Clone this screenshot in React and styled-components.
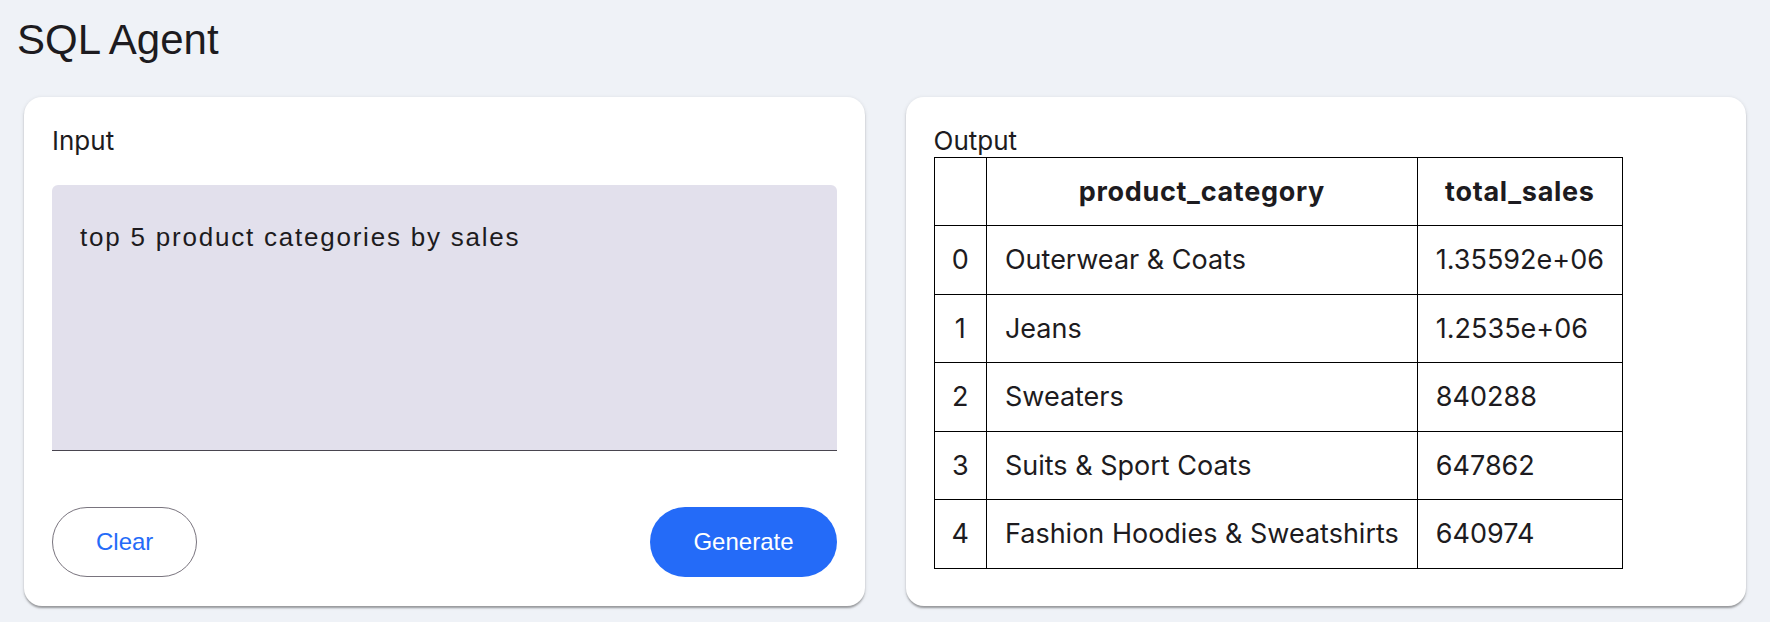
import React from "react";
import styled, { createGlobalStyle } from "styled-components";

const GlobalStyle = createGlobalStyle`
  html, body { margin: 0; padding: 0; }
  body { background: #eff2f7; font-family: "Liberation Sans", Arial, sans-serif; color: #1d1b20; }
  * { box-sizing: border-box; }
`;

const Page = styled.div`
  min-height: 100vh;
  background: #eff2f7;
  padding-top: 16px;
`;

const Title = styled.h1`
  margin: 0;
  padding: 0 17px;
  font-family: "Liberation Sans", Arial, sans-serif;
  font-weight: 400;
  font-size: 42px;
  line-height: normal;
  color: #1d1b20;
`;

const Columns = styled.div`
  display: grid;
  grid-template-columns: 1fr 1fr;
  column-gap: 41px;
  padding: 33px 24px 0 24px;
  align-items: stretch;
`;

const Card = styled.section`
  background: #ffffff;
  border-radius: 18px;
  padding: 28px 28px 29px 28px;
  box-shadow: 0 3px 2px -1px rgba(0, 0, 0, 0.2), 0 2px 2px 0 rgba(0, 0, 0, 0.14),
    0 1px 4px 0 rgba(0, 0, 0, 0.12);
  display: flex;
  flex-direction: column;
`;

const Label = styled.div`
  font-family: Inter, "Liberation Sans", sans-serif;
  font-size: 26px;
  font-weight: 400;
  line-height: normal;
  color: #1d1b20;
  margin-bottom: ${(p) => (p.$gap ? p.$gap : 0)}px;
`;

const TextArea = styled.textarea`
  display: block;
  width: 100%;
  height: 266px;
  resize: none;
  border: none;
  border-bottom: 1.5px solid #49454f;
  border-radius: 6px 6px 0 0;
  background: #e2e0ec;
  padding: 37px 28px;
  font-family: "Liberation Sans", Arial, sans-serif;
  font-size: 26px;
  letter-spacing: 1.78px;
  line-height: normal;
  color: #1d1b20;
  outline: none;
`;

const ButtonRow = styled.div`
  display: flex;
  justify-content: space-between;
  align-items: center;
  margin-top: 56px;
`;

const Button = styled.button`
  height: 70px;
  padding: 0 43px;
  border-radius: 999px;
  font-family: "Liberation Sans", Arial, sans-serif;
  font-size: 24px;
  cursor: pointer;
  border: ${(p) => (p.$filled ? "none" : "1px solid #79747e")};
  background: ${(p) => (p.$filled ? "#246bf8" : "#ffffff")};
  color: ${(p) => (p.$filled ? "#ffffff" : "#246bf8")};
`;

const Table = styled.table`
  border-collapse: collapse;
  border: 1px solid #000;
  font-family: Inter, "Liberation Sans", sans-serif;
  font-size: 27px;
  color: #1d1b20;
  align-self: flex-start;
`;

const HeadCell = styled.th`
  border: 1px solid #000;
  padding: 18px;
  line-height: 31px;
  font-weight: 700;
  letter-spacing: 0.7px;
  text-align: center;
  white-space: nowrap;
`;

const IndexCell = styled.td`
  border: 1px solid #000;
  padding: 18px 17px;
  line-height: 31.5px;
  font-weight: 400;
  text-align: center;
`;

const Cell = styled.td`
  border: 1px solid #000;
  padding: 18px;
  line-height: 31.5px;
  text-align: left;
  white-space: nowrap;
`;

const rows = [
  ["Outerwear & Coats", "1.35592e+06"],
  ["Jeans", "1.2535e+06"],
  ["Sweaters", "840288"],
  ["Suits & Sport Coats", "647862"],
  ["Fashion Hoodies & Sweatshirts", "640974"],
];

export default function App() {
  return (
    <Page>
      <GlobalStyle />
      <Title>SQL Agent</Title>
      <Columns>
        <Card>
          <Label $gap={29}>Input</Label>
          <TextArea defaultValue="top 5 product categories by sales" />
          <ButtonRow>
            <Button>Clear</Button>
            <Button $filled>Generate</Button>
          </ButtonRow>
        </Card>
        <Card>
          <Label $gap={1}>Output</Label>
          <Table>
            <thead>
              <tr>
                <HeadCell></HeadCell>
                <HeadCell>product_category</HeadCell>
                <HeadCell>total_sales</HeadCell>
              </tr>
            </thead>
            <tbody>
              {rows.map((r, i) => (
                <tr key={i}>
                  <IndexCell>{i}</IndexCell>
                  <Cell>{r[0]}</Cell>
                  <Cell>{r[1]}</Cell>
                </tr>
              ))}
            </tbody>
          </Table>
        </Card>
      </Columns>
    </Page>
  );
}
